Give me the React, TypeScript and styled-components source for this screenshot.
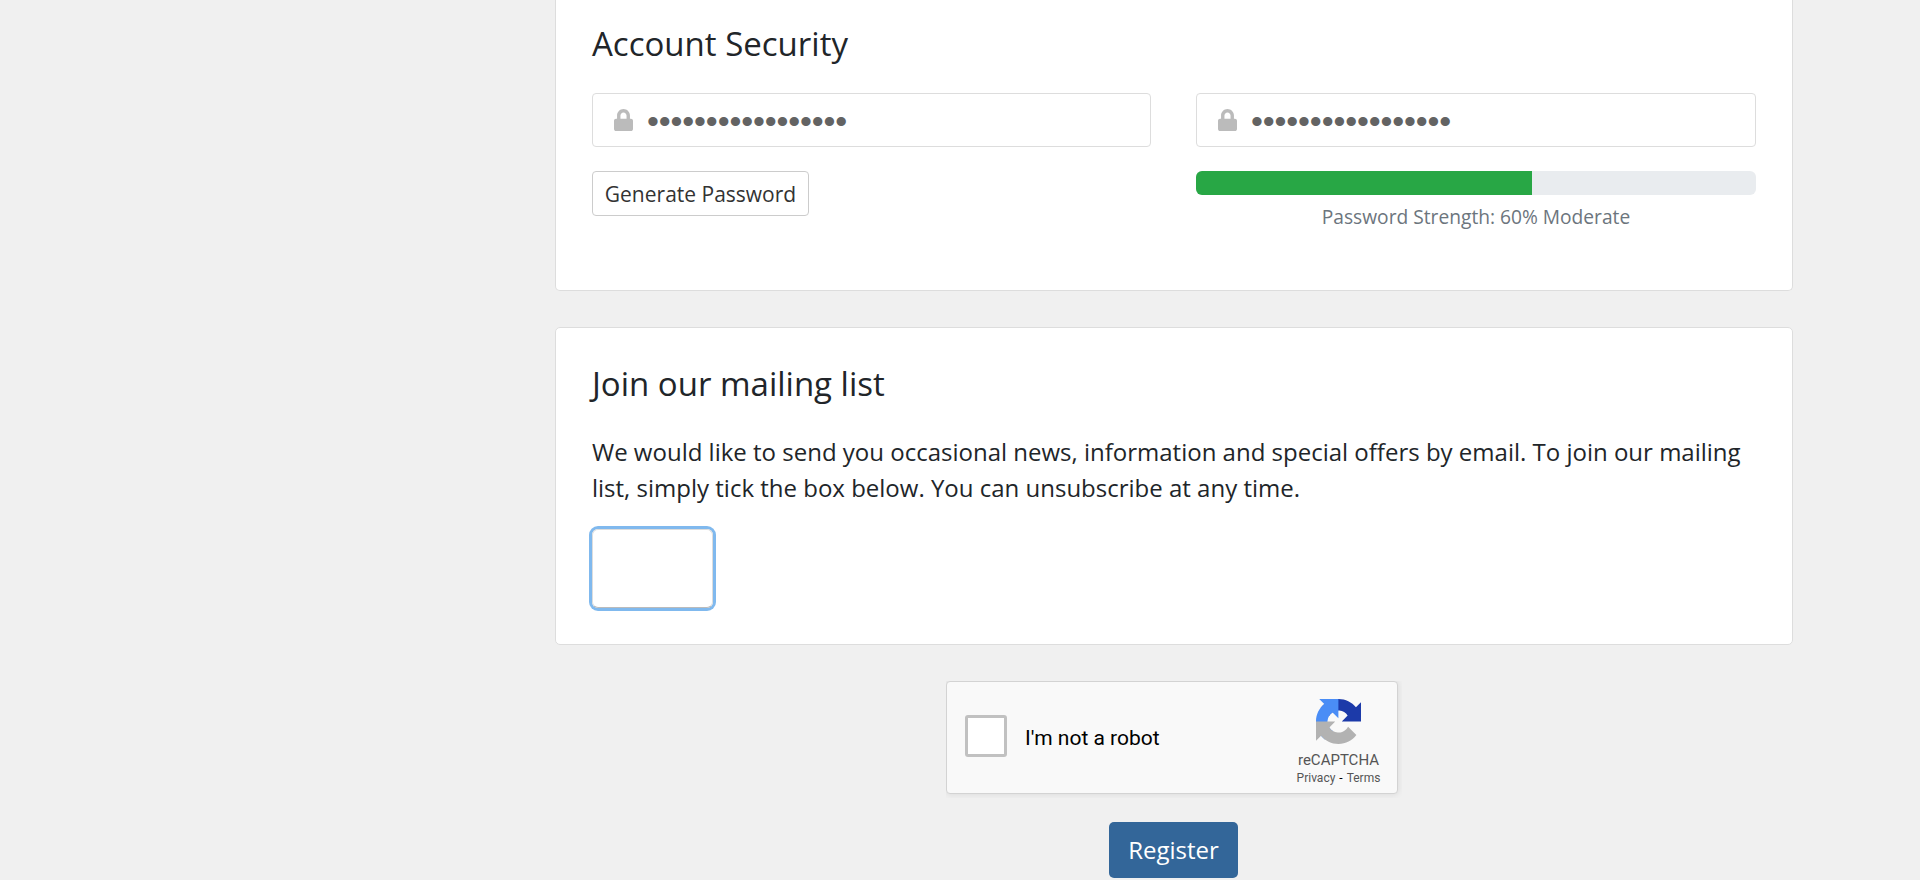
import React from "react";
import styled, { createGlobalStyle } from "styled-components";

const GlobalStyle = createGlobalStyle`
  * { box-sizing: border-box; }
  html, body { margin: 0; background: #f0f0f0; overflow: hidden; }
  body {
    font-family: "Open Sans", sans-serif;
    font-size: 24px;
    line-height: 36px;
    color: #212529;
  }
`;

const Page = styled.main`
  width: 1238px;
  height: 880px;
  margin-left: 555px;
  display: flex;
  flex-direction: column;
  overflow: hidden;
`;

const Card = styled.section<{ $height: number; $first?: boolean }>`
  flex: none;
  height: ${(p) => p.$height}px;
  margin-bottom: 36px;
  padding: ${(p) => (p.$first ? "24px 36px 0" : "36px 36px 0")};
  background: #fff;
  border: 1px solid #ddd;
  border-top-width: ${(p) => (p.$first ? 0 : 1)}px;
  border-radius: ${(p) => (p.$first ? "0 0 5px 5px" : "5px")};
`;

const Title = styled.h3`
  margin: 0;
  font-size: 33px;
  line-height: 40px;
  font-weight: 400;
`;

const Columns = styled.div`
  display: grid;
  grid-template-columns: 559px 560px;
  column-gap: 45px;
  margin-top: 29px;
`;

const Column = styled.div`
  display: flex;
  flex-direction: column;
  align-items: flex-start;
`;

const Field = styled.div`
  width: 100%;
  height: 54px;
  margin-bottom: 24px;
  padding-left: 21px;
  display: flex;
  align-items: center;
  border: 1px solid #ddd;
  border-radius: 4px;
`;

const LockIcon = styled.svg`
  width: 19px;
  height: 22px;
  margin-top: -1px;
  fill: #bbb;
`;

const Dots = styled.span`
  margin: 2px 0 0 14px;
  font-family: "Liberation Sans", sans-serif;
  font-size: 34px;
  line-height: 50px;
  letter-spacing: -0.13px;
  color: #636363;
`;

const GenerateButton = styled.button`
  width: 217px;
  height: 45px;
  padding: 2px 0 0;
  font: 21px/31px "Open Sans", sans-serif;
  color: #333;
  background: #fff;
  border: 1px solid #ccc;
  border-radius: 4px;
`;

const Meter = styled.div`
  width: 100%;
  height: 24px;
  overflow: hidden;
  background: #e9ecef;
  border-radius: 6px;
`;

const MeterFill = styled.div`
  width: 60%;
  height: 100%;
  background: #28a745;
`;

const MeterLabel = styled.p`
  width: 100%;
  margin: 7px 0 0;
  font-size: 19.2px;
  line-height: 29px;
  text-align: center;
  color: #6c757d;
`;

const Copy = styled.p`
  margin: 30px 0 0;
  white-space: nowrap;
`;

const Toggle = styled.div`
  width: 121px;
  height: 79px;
  margin-top: 23px;
  border: 1px solid #ddd;
  border-bottom-color: #bbb;
  border-radius: 6px;
  box-shadow: 0 0 0 3px #80b9ee;
`;

/* The widget frame clips the shadow at its left and top edges. */
const CaptchaFrame = styled.div`
  flex: none;
  align-self: center;
  width: 456px;
  height: 117px;
  overflow: hidden;
`;

const Captcha = styled.div`
  width: 452px;
  height: 113px;
  padding-left: 18px;
  display: flex;
  align-items: center;
  background: #f9f9f9;
  border: 1px solid #d3d3d3;
  border-radius: 4px;
  box-shadow: 0 0 6px 1px rgba(0, 0, 0, 0.08);
  font-family: Roboto, sans-serif;
`;

const CheckBox = styled.div`
  width: 42px;
  height: 42px;
  margin-top: -3px;
  background: #fff;
  border: 3px solid #c1c1c1;
  border-radius: 3px;
`;

const CaptchaLabel = styled.span`
  margin-left: 18px;
  font-size: 21px;
  line-height: 26px;
  color: #000;
`;

const Brand = styled.div`
  width: 105px;
  height: 100%;
  margin-left: auto;
  margin-right: 6px;
  padding-top: 17px;
  display: flex;
  flex-direction: column;
  align-items: center;
  color: #555;
`;

const Logo = styled.svg`
  width: 45px;
  height: 45px;
`;

const BrandName = styled.span`
  margin-top: 7px;
  font-size: 15px;
  line-height: 18px;
`;

const BrandLinks = styled.span`
  display: flex;
  gap: 4px;
  font-size: 12px;
  line-height: 18px;
`;

const Separator = styled.span`
  color: #000;
`;

const Register = styled.button`
  flex: none;
  align-self: center;
  width: 129px;
  height: 56px;
  margin: 24px 1px 0 0;
  padding: 0;
  font: 24px/36px "Open Sans", sans-serif;
  color: #fff;
  background: #336699;
  border: 0;
  border-radius: 5px;
`;

const PasswordField = () => (
  <Field>
    <LockIcon viewBox="0 0 448 512" preserveAspectRatio="none">
      <path d="M400 224h-24v-72C376 68.200 307.800 0 224 0S72 68.200 72 152v72H48c-26.500 0-48 21.500-48 48v192c0 26.500 21.500 48 48 48h352c26.500 0 48-21.500 48-48V272c0-26.500-21.500-48-48-48zm-104 0H152v-72c0-39.700 32.300-72 72-72s72 32.300 72 72v72z" />
    </LockIcon>
    <Dots>{"•".repeat(17)}</Dots>
  </Field>
);

const CaptchaLogo = () => (
  <Logo viewBox="0 0 64 64">
    <path fill="#1c3aa9" d="M64 31.955l-.033-1.37V4.687l-7.16 7.16C50.948 4.674 42.033.093 32.05.093c-10.4 0-19.622 4.96-25.458 12.64l11.736 11.86a15.55 15.55 0 0 1 4.754-5.334c2.05-1.6 4.952-2.906 8.968-2.906.485 0 .86.057 1.135.163 4.976.393 9.288 3.14 11.828 7.124l-8.307 8.307L64 31.953" />
    <path fill="#4a8df6" d="M31.862.094l-1.37.033H4.594l7.16 7.16C4.58 13.147 0 22.06 0 32.046c0 10.4 4.96 19.622 12.64 25.458L24.5 45.768a15.55 15.55 0 0 1-5.334-4.754c-1.6-2.05-2.906-4.952-2.906-8.968 0-.485.057-.86.163-1.135.393-4.976 3.14-9.288 7.124-11.828l8.307 8.307L31.86.095" />
    <path fill="#b2b2b2" d="M.001 32.045l.033 1.37v25.898l7.16-7.16c5.86 7.173 14.774 11.754 24.76 11.754 10.4 0 19.622-4.96 25.458-12.64l-11.736-11.86a15.55 15.55 0 0 1-4.754 5.334c-2.05 1.6-4.952 2.906-8.968 2.906-.485 0-.86-.057-1.135-.163-4.976-.393-9.288-3.14-11.828-7.124l8.307-8.307c-10.522.04-22.4.066-27.295-.005" />
  </Logo>
);

export default function App() {
  return (
    <>
      <GlobalStyle />
      <Page>
        <Card $height={291} $first>
          <Title>Account Security</Title>
          <Columns>
            <Column>
              <PasswordField />
              <GenerateButton>Generate Password</GenerateButton>
            </Column>
            <Column>
              <PasswordField />
              <Meter>
                <MeterFill />
              </Meter>
              <MeterLabel>Password Strength: 60% Moderate</MeterLabel>
            </Column>
          </Columns>
        </Card>
        <Card $height={318}>
          <Title>Join our mailing list</Title>
          <Copy>
            We would like to send you occasional news, information and special offers by email. To join our mailing
            <br />
            list, simply tick the box below. You can unsubscribe at any time.
          </Copy>
          <Toggle />
        </Card>
        <CaptchaFrame>
          <Captcha>
            <CheckBox />
            <CaptchaLabel>I'm not a robot</CaptchaLabel>
            <Brand>
              <CaptchaLogo />
              <BrandName>reCAPTCHA</BrandName>
              <BrandLinks>
                <span>Privacy</span>
                <Separator>-</Separator>
                <span>Terms</span>
              </BrandLinks>
            </Brand>
          </Captcha>
        </CaptchaFrame>
        <Register>Register</Register>
      </Page>
    </>
  );
}
